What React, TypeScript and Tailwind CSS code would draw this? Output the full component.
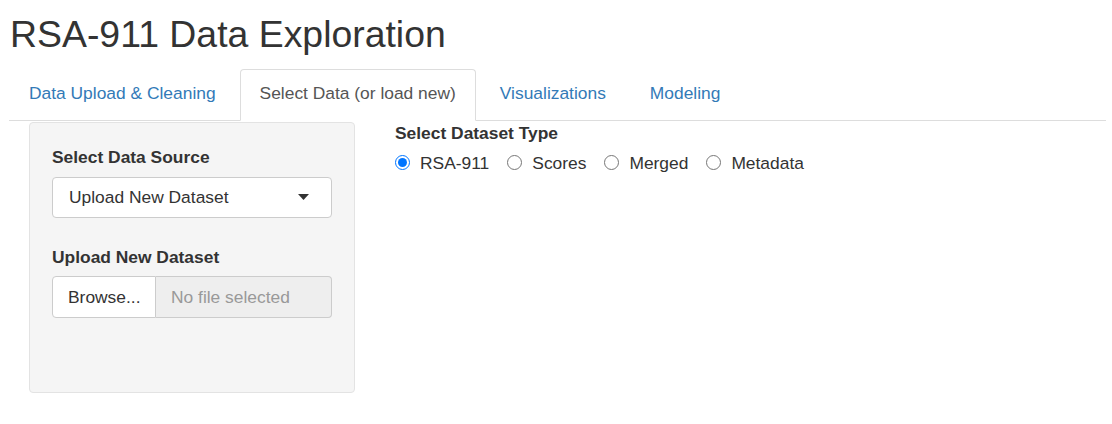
import React, { useState } from 'react';

const tabs = ['Data Upload & Cleaning', 'Select Data (or load new)', 'Visualizations', 'Modeling'];
const types = ['RSA-911', 'Scores', 'Merged', 'Metadata'];

const App: React.FC = () => {
  const [active, setActive] = useState(1);
  const [dataType, setDataType] = useState('RSA-911');

  return (
    <div className="min-h-[424px] bg-white pl-[9px] pr-[6px] font-['Liberation_Sans',Arial,sans-serif] text-[17.4px] text-[#333]">
      <h2 className="mt-[15px] pl-px text-[37.4px] leading-[39.6px] font-normal text-[#333]">RSA-911 Data Exploration</h2>

      <ul className="mt-[14px] flex border-b border-[#ddd]">
        {tabs.map((t, i) => (
          <li key={t} className="-mb-px mr-[4px]">
            <button
              onClick={() => setActive(i)}
              className={`block h-[52px] rounded-t-[4px] border px-[19px] pt-[11px] pb-[15px] leading-[24px] ${
                active === i
                  ? 'border-[#ddd] border-b-white bg-white text-[#555]'
                  : 'border-transparent text-[#337ab7]'
              }`}
            >
              {t}
            </button>
          </li>
        ))}
      </ul>

      <div className="flex pl-[20px]">
        <div className="mt-px h-[271px] w-[326px] rounded-[4px] border border-[#e3e3e3] bg-[#f5f5f5] px-[22px] pt-[22px]">
          <label className="block font-bold leading-[24px]">Select Data Source</label>
          <div className="mt-[8px] flex h-[41px] items-center justify-between rounded-[4px] border border-[#ccc] bg-white pl-[16px] pr-[22px]">
            <span>Upload New Dataset</span>
            <svg width="11" height="6" viewBox="0 0 11 6">
              <path d="M0 0 L11 0 L5.5 6 Z" fill="#333" />
            </svg>
          </div>

          <label className="mt-[27px] block font-bold leading-[24px]">Upload New Dataset</label>
          <div className="mt-[7px] flex h-[42px]">
            <div className="flex w-[104px] items-center rounded-l-[4px] border border-[#ccc] bg-white pl-[15px]">Browse...</div>
            <div className="flex flex-1 items-center rounded-r-[4px] border border-l-0 border-[#ccc] bg-[#eee] pl-[15px] text-[#999]">
              No file selected
            </div>
          </div>
        </div>

        <div className="ml-[40px]">
          <label className="block font-bold leading-[24px]">Select Dataset Type</label>
          <div className="mt-[6px] flex items-center gap-[18px]">
            {types.map((t) => (
              <label key={t} className="flex items-center gap-[10px] leading-[24px]">
                <input
                  type="radio"
                  name="dtype"
                  checked={dataType === t}
                  onChange={() => setDataType(t)}
                  className="m-0 h-[15px] w-[15px] accent-[#0075ff]"
                />
                <span>{t}</span>
              </label>
            ))}
          </div>
        </div>
      </div>
    </div>
  );
};

export default App;
